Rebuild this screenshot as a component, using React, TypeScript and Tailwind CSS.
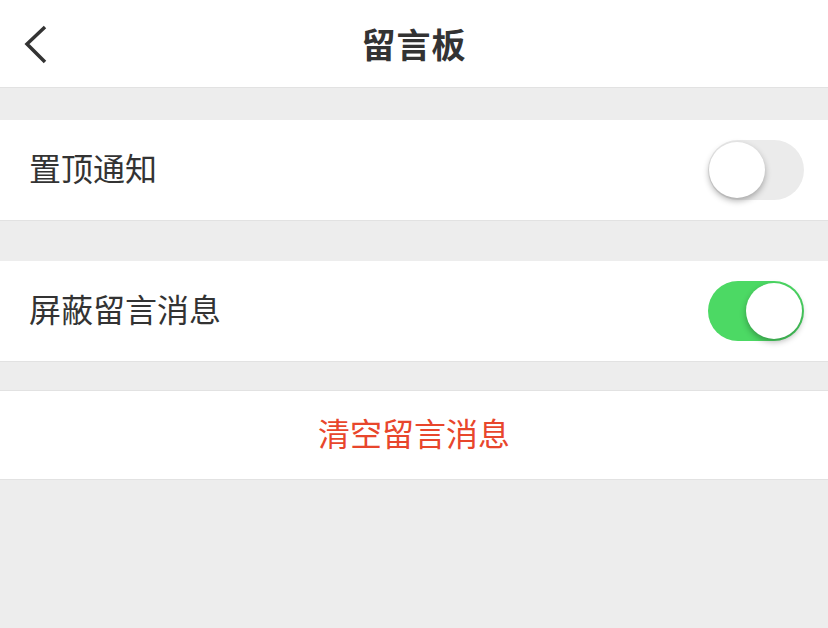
import { useState } from "react";

function Toggle({ on, onChange }: { on: boolean; onChange: () => void }) {
  return (
    <button
      onClick={onChange}
      className={`relative h-[60px] w-[96px] rounded-full transition-colors ${
        on ? "bg-[#4cd964]" : "bg-[#ebebeb]"
      }`}
    >
      <span
        className={`absolute top-[2px] h-[56px] w-[56px] rounded-full bg-white shadow-[0_3px_6px_rgba(0,0,0,0.3)] transition-all ${
          on ? "left-[38px]" : "left-[1px]"
        }`}
      />
    </button>
  );
}

export default function App() {
  const [pinned, setPinned] = useState(false);
  const [blocked, setBlocked] = useState(true);

  return (
    <div
      className="min-h-[628px] bg-[#ededed] text-[#333]"
      style={{ fontFamily: '"Noto Sans CJK SC", "Noto Sans", sans-serif' }}
    >
      <header className="relative flex h-[88px] items-center justify-center border-b border-[#e2e2e2] bg-white">
        <button className="absolute left-[22px] top-[24px] p-0">
          <svg width="28" height="40" viewBox="0 0 28 40" fill="none">
            <path d="M23 3 L5 20 L23 38" stroke="#333" strokeWidth="3.5" strokeLinejoin="miter" />
          </svg>
        </button>
        <h1 className="text-[34px] font-bold tracking-[1px]">留言板</h1>
      </header>

      <div className="h-[32px]" />

      <div className="flex h-[101px] items-center justify-between border-b border-[#e2e2e2] bg-white pl-[29px] pr-[24px]">
        <span className="mb-[6px] text-[32px]">置顶通知</span>
        <Toggle on={pinned} onChange={() => setPinned(!pinned)} />
      </div>

      <div className="h-[40px]" />

      <div className="flex h-[101px] items-center justify-between border-b border-[#e2e2e2] bg-white pl-[29px] pr-[24px]">
        <span className="mb-[6px] text-[32px]">屏蔽留言消息</span>
        <Toggle on={blocked} onChange={() => setBlocked(!blocked)} />
      </div>

      <div className="h-[28px]" />

      <button className="flex h-[90px] w-full items-center justify-center border-y border-[#e2e2e2] bg-white text-[#e8462c]">
        <span className="mb-[6px] text-[32px]">清空留言消息</span>
      </button>
    </div>
  );
}
